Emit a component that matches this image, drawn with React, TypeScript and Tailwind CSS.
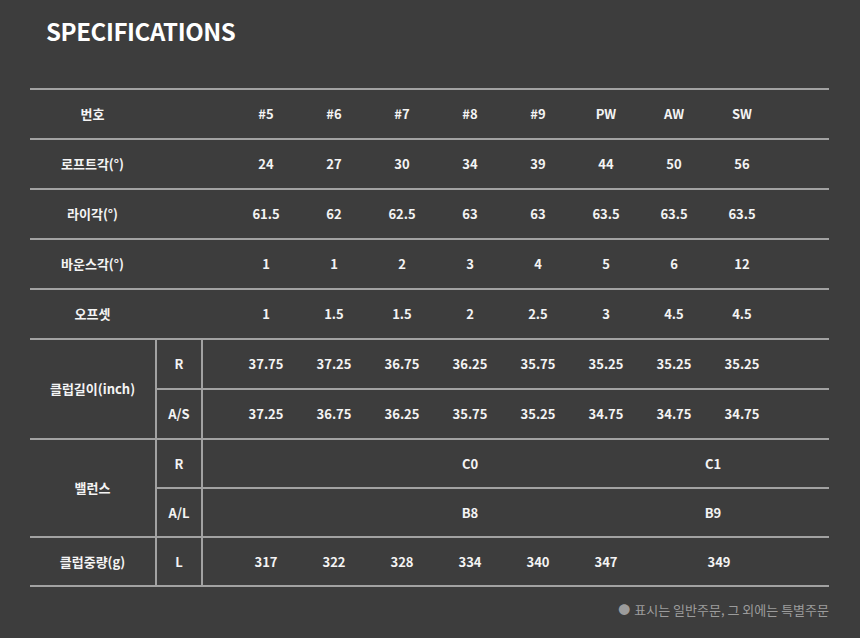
const FONT = "font-['Noto_Sans_CJK_KR','Noto_Sans',sans-serif]";

// label | sub | gap | #5..SW | tail
const COLS = 'grid grid-cols-[125px_46px_31px_repeat(8,68px)_53px]';
const SUB_COLS = 'grid grid-cols-[29px_repeat(8,68px)_53px]';

const simpleRows: { label: string; values: string[] }[] = [
  { label: '번호', values: ['#5', '#6', '#7', '#8', '#9', 'PW', 'AW', 'SW'] },
  { label: '로프트각(°)', values: ['24', '27', '30', '34', '39', '44', '50', '56'] },
  { label: '라이각(°)', values: ['61.5', '62', '62.5', '63', '63', '63.5', '63.5', '63.5'] },
  { label: '바운스각(°)', values: ['1', '1', '2', '3', '4', '5', '6', '12'] },
  { label: '오프셋', values: ['1', '1.5', '1.5', '2', '2.5', '3', '4.5', '4.5'] },
];

const lengthRows = [
  { sub: 'R', values: ['37.75', '37.25', '36.75', '36.25', '35.75', '35.25', '35.25', '35.25'] },
  { sub: 'A/S', values: ['37.25', '36.75', '36.25', '35.75', '35.25', '34.75', '34.75', '34.75'] },
];

const balanceRows = [
  { sub: 'R', left: 'C0', right: 'C1' },
  { sub: 'A/L', left: 'B8', right: 'B9' },
];

function Cell({ children, className = '' }: { children?: React.ReactNode; className?: string }) {
  return <div className={`flex items-center justify-center ${className}`}>{children}</div>;
}

export default function App() {
  return (
    <div className={`min-h-[638px] w-[860px] bg-[#3d3d3d] text-[#f4f4f4] ${FONT}`}>
      <div className="px-[30px] pt-[14px]">
        <h1 className="pl-[16px] text-[24px] font-bold leading-[34px] tracking-[-0.4px] text-white">SPECIFICATIONS</h1>

        <div className="mt-[40px] w-[799px] border-t-2 border-[#a2a2a2] text-[13px] font-bold">
          {simpleRows.map(row => (
            <div key={row.label} className={`${COLS} h-[50px] border-b-2 border-[#a2a2a2]`}>
              <Cell>{row.label}</Cell>
              <div />
              <div />
              {row.values.map((v, i) => (
                <Cell key={i}>{v}</Cell>
              ))}
              <div />
            </div>
          ))}

          {/* 클럽길이 */}
          <div className="flex border-b-2 border-[#a2a2a2]">
            <Cell className="w-[125px] shrink-0">클럽길이(inch)</Cell>
            <div className="flex-1 border-l-2 border-[#a2a2a2]">
              {lengthRows.map((r, ri) => (
                <div key={r.sub} className={`flex ${ri === 0 ? 'h-[50px] border-b-2 border-[#a2a2a2]' : 'h-[48px]'}`}>
                  <Cell className="w-[44px] shrink-0">{r.sub}</Cell>
                  <div className={`${SUB_COLS} flex-1 border-l-2 border-[#a2a2a2]`}>
                    <div />
                    {r.values.map((v, i) => (
                      <Cell key={i}>{v}</Cell>
                    ))}
                    <div />
                  </div>
                </div>
              ))}
            </div>
          </div>

          {/* 밸런스 */}
          <div className="flex border-b-2 border-[#a2a2a2]">
            <Cell className="w-[125px] shrink-0">밸런스</Cell>
            <div className="flex-1 border-l-2 border-[#a2a2a2]">
              {balanceRows.map((r, ri) => (
                <div key={r.sub} className={`flex ${ri === 0 ? 'h-[49px] border-b-2 border-[#a2a2a2]' : 'h-[47px]'}`}>
                  <Cell className="w-[44px] shrink-0">{r.sub}</Cell>
                  <div className={`${SUB_COLS} flex-1 border-l-2 border-[#a2a2a2]`}>
                    <div />
                    <Cell className="col-span-6 pl-[68px]">{r.left}</Cell>
                    <Cell className="col-span-2 pl-[10px]">{r.right}</Cell>
                    <div />
                  </div>
                </div>
              ))}
            </div>
          </div>

          {/* 클럽중량 */}
          <div className="flex h-[49px] border-b-2 border-[#a2a2a2]">
            <Cell className="w-[125px] shrink-0">클럽중량(g)</Cell>
            <div className="flex flex-1 border-l-2 border-[#a2a2a2]">
              <Cell className="w-[44px] shrink-0">L</Cell>
              <div className={`${SUB_COLS} flex-1 border-l-2 border-[#a2a2a2]`}>
                <div />
                {['317', '322', '328', '334', '340', '347'].map((v, i) => (
                  <Cell key={i}>{v}</Cell>
                ))}
                <Cell className="col-span-2 pl-[22px]">349</Cell>
                <div />
              </div>
            </div>
          </div>
        </div>

        <div className="mt-[13px] flex w-[799px] items-center justify-end text-[13px] text-[#9c9c9c]">
          <span className="mr-[4px] text-[12px]">●</span>
          <span>표시는 일반주문, 그 외에는 특별주문</span>
        </div>
      </div>
    </div>
  );
}
